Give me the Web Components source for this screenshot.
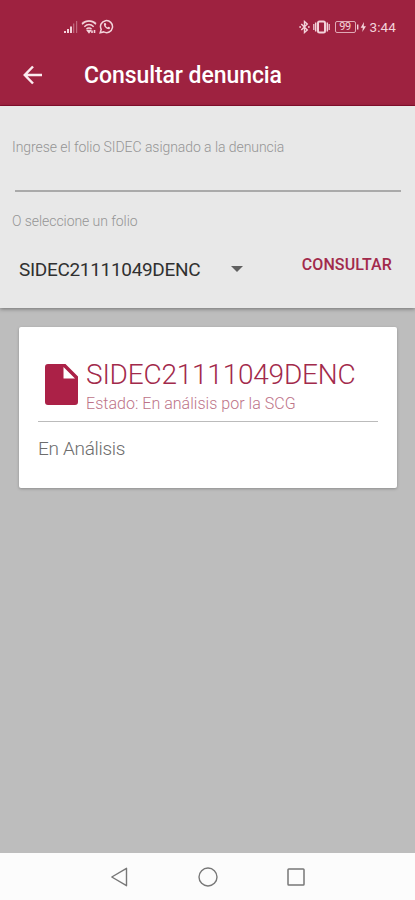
<!DOCTYPE html>
<html lang="es">
<head>
<meta charset="utf-8">
<meta name="viewport" content="width=device-width, initial-scale=1">
<title>Consultar denuncia</title>
<style>
    body {
        margin: 0;
        font-family: Roboto, "Liberation Sans", sans-serif;
    }
</style>
</head>
<body>
<denuncia-app>
    <status-bar slot="header" time="3:44" battery="99"></status-bar>
    <app-bar slot="header">Consultar denuncia</app-bar>
    <folio-form folio="SIDEC21111049DENC"></folio-form>
    <folio-card>
        <span slot="title">SIDEC21111049DENC</span>
        <span slot="state">Estado: En análisis por la SCG</span>
        En Análisis
    </folio-card>
    <nav-bar slot="footer"></nav-bar>
</denuncia-app>

<script>
function attachTemplate(element, html) {
    const template = document.createElement('template');
    template.innerHTML = html;
    const root = element.attachShadow({ mode: 'open' });
    root.appendChild(template.content.cloneNode(true));
    return root;
}

class DenunciaApp extends HTMLElement {
    constructor() {
        super();
        attachTemplate(this, `
            <style>
                :host {
                    display: flex;
                    flex-direction: column;
                    height: 900px;
                    background-color: #bdbdbd;
                }

                header {
                    height: 106px;
                    box-sizing: border-box;
                    background-color: #9e2240;
                    border-bottom: 1px solid #8c0f2f;
                }

                main {
                    flex: 1;
                }
            </style>
            <header><slot name="header"></slot></header>
            <main><slot></slot></main>
            <slot name="footer"></slot>
        `);
    }
}

class StatusBar extends HTMLElement {
    constructor() {
        super();
        this._shadowRoot = attachTemplate(this, `
            <style>
                :host {
                    display: flex;
                    justify-content: space-between;
                    align-items: center;
                    height: 53px;
                    padding: 0 19px 0 63px;
                    box-sizing: border-box;
                    color: #f3d3da;
                    font-size: 13.500px;
                }

                .group {
                    display: flex;
                    align-items: center;
                }

                svg {
                    display: block;
                }

                .battery {
                    display: flex;
                    align-items: center;
                    justify-content: center;
                    width: 21px;
                    height: 12px;
                    box-sizing: border-box;
                    border: 1px solid #e0a9b5;
                    border-radius: 2px;
                    margin-left: 5px;
                    font-size: 11px;
                    line-height: 10px;
                    letter-spacing: -0.3px;
                }

                .time {
                    margin-left: 3px;
                    line-height: 16px;
                    letter-spacing: 0.1px;
                }
            </style>
            <div class="group">
                <svg width="16" height="14" viewBox="0 0 16 14" fill="currentColor">
                    <path d="M1 11h2v2H1zM4 9h2v4H4zM7 6.500h2V13H7z"/>
                    <path d="M10 3.500h1.300V13H10zM13 1h1.200v12H13z" opacity=".4"/>
                </svg>
                <svg style="margin-left: 2px" width="16" height="14" viewBox="0 0 16 14" fill="none" stroke="currentColor" stroke-width="1.500">
                    <path d="M1 4.200C5 0 11 0 15 4.200M3.300 6.700c3-2.800 6.400-2.800 9.400 0M5.500 9c1.400-1.400 3.600-1.400 5 0"/>
                    <path d="M1 2.800C5 .4 11 .4 15 2.800" opacity=".6"/>
                    <path d="M6.500 10.500l1.500 2 1.500-2z"/>
                    <path d="M11 10.500v2.500m2.500-3v3" stroke-width="1.600"/>
                </svg>
                <svg style="margin-left: 2px" width="15" height="15" viewBox="0 0 15 15" fill="none" stroke="currentColor" stroke-width="1.500">
                    <path d="M1.200 13.800l1-3.400A6 6 0 1 1 4.700 12.900z"/>
                    <path d="M5 4.200c-.7 3.200 2.500 6.400 5.700 5.900l.4-1.500-1.700-.9-.9.900C7.600 8.200 6.900 7.500 6.600 6.600l.7-.9-.7-1.600z" fill="currentColor" stroke="none"/>
                </svg>
            </div>
            <div class="group">
                <svg width="11" height="14" viewBox="0 0 11 14" fill="none" stroke="currentColor" stroke-width="1.400">
                    <path d="M2.300 4l6 6L5.500 12.500V1.500L8.300 4l-6 6"/>
                    <path d="M.3 7h1.700M9 7h1.700" stroke-width="1.600"/>
                </svg>
                <svg style="margin-left: 3px" width="17" height="14" viewBox="0 0 17 14" fill="none" stroke="currentColor">
                    <rect x="5" y="1.500" width="7" height="11" rx="1.500" stroke-width="2"/>
                    <path d="M2.700 2.500v9M14.300 2.500v9" stroke-width="1.500"/>
                    <path d="M.8 4v6M16.200 4v6" stroke-width="1.200"/>
                </svg>
                <div class="battery"></div>
                <svg style="margin-left: 1px" width="10" height="12" viewBox="0 0 10 12" fill="currentColor">
                    <path d="M0 3.500h1.400v5H0z"/>
                    <path d="M7 1L3.700 6.700h2.100L5.300 11 9 5.200H6.700z"/>
                </svg>
                <div class="time"></div>
            </div>
        `);
    }

    connectedCallback() {
        this._shadowRoot.querySelector('.battery').textContent = this.getAttribute('battery');
        this._shadowRoot.querySelector('.time').textContent = this.getAttribute('time');
    }
}

class AppBar extends HTMLElement {
    constructor() {
        super();
        attachTemplate(this, `
            <style>
                :host {
                    display: flex;
                    align-items: center;
                    gap: 41px;
                    height: 44px;
                    padding-left: 23px;
                    color: #fff;
                    font-size: 23px;
                    font-weight: 500;
                    letter-spacing: -0.070px;
                }

                svg {
                    display: block;
                }
            </style>
            <svg width="20" height="20" viewBox="0 0 20 20" fill="none" stroke="#fbeaee" stroke-width="2.500">
                <path d="M19 10H2M10 1.500L1.800 10 10 18.500"/>
            </svg>
            <span><slot></slot></span>
        `);
    }
}

class FolioForm extends HTMLElement {
    constructor() {
        super();
        this._shadowRoot = attachTemplate(this, `
            <style>
                :host {
                    display: block;
                    height: 202px;
                    box-sizing: border-box;
                    padding: 32px 14px 0 12px;
                    background-color: #e8e8e8;
                    box-shadow: 0 1px 4px rgba(0, 0, 0, .4);
                }

                label {
                    display: block;
                    color: #959595;
                    font-size: 14px;
                    font-weight: 300;
                    line-height: 18px;
                    letter-spacing: -0.060px;
                }

                .field {
                    height: 34px;
                    margin: 0 0 20px 3px;
                    border-bottom: 2px solid #aaa;
                }

                .row {
                    display: flex;
                    justify-content: space-between;
                    align-items: center;
                    height: 40px;
                    margin-top: 18px;
                    padding: 0 9px 0 7px;
                }

                .select {
                    display: flex;
                    align-items: center;
                    gap: 31px;
                    padding-top: 2px;
                    color: #303030;
                    font-size: 19px;
                    letter-spacing: -0.320px;
                }

                button {
                    margin: 0 0 7px;
                    padding: 0;
                    border: 0;
                    background: none;
                    color: #a22a4b;
                    font-family: inherit;
                    font-size: 16px;
                    font-weight: 500;
                    letter-spacing: 0.100px;
                }
            </style>
            <label>Ingrese el folio SIDEC asignado a la denuncia</label>
            <div class="field"></div>
            <label>O seleccione un folio</label>
            <div class="row">
                <div class="select">
                    <span class="value"></span>
                    <svg width="12" height="6" viewBox="0 0 12 6" fill="#606060"><path d="M0 0h12L6 6z"/></svg>
                </div>
                <button>CONSULTAR</button>
            </div>
        `);
    }

    connectedCallback() {
        this._shadowRoot.querySelector('.value').textContent = this.getAttribute('folio');
    }
}

class FolioCard extends HTMLElement {
    constructor() {
        super();
        attachTemplate(this, `
            <style>
                :host {
                    display: block;
                    height: 161px;
                    margin: 19px 18px 0 19px;
                    padding: 31px 19px 0;
                    box-sizing: border-box;
                    border-radius: 2px;
                    background-color: #fff;
                    box-shadow: 0 1px 3px rgba(0, 0, 0, .25);
                    color: #6d6d6d;
                    font-size: 19px;
                    font-weight: 300;
                    letter-spacing: -0.300px;
                }

                .head {
                    display: flex;
                    height: 63px;
                    padding-left: 7px;
                    border-bottom: 1px solid #bbb;
                }

                svg {
                    display: block;
                    margin: 6px 8px 0 0;
                }

                .title {
                    color: #a22a4b;
                    font-size: 28px;
                    line-height: 34px;
                    letter-spacing: -0.220px;
                }

                .state {
                    color: #bd7388;
                    font-size: 16px;
                    line-height: 24px;
                    letter-spacing: 0.030px;
                }

                .body {
                    margin-top: 15px;
                    line-height: 24px;
                }
            </style>
            <div class="head">
                <svg width="33" height="41" viewBox="0 0 33 41" fill="#ab2147">
                    <path fill-rule="evenodd" d="M3 0h17.500L33 12.500V38a3 3 0 0 1-3 3H3a3 3 0 0 1-3-3V3a3 3 0 0 1 3-3zM18.500 3v11.500H30z"/>
                </svg>
                <div>
                    <div class="title"><slot name="title"></slot></div>
                    <div class="state"><slot name="state"></slot></div>
                </div>
            </div>
            <div class="body"><slot></slot></div>
        `);
    }
}

class NavBar extends HTMLElement {
    constructor() {
        super();
        attachTemplate(this, `
            <style>
                :host {
                    display: flex;
                    justify-content: center;
                    align-items: center;
                    gap: 68px;
                    height: 47px;
                    background-color: #fcfcfc;
                }

                svg {
                    display: block;
                }
            </style>
            <svg width="20" height="20" viewBox="0 0 20 20" fill="none" stroke="#777" stroke-width="1.400" stroke-linejoin="round"><path d="M16.500 1.300v17.400L1.800 10z"/></svg>
            <svg width="20" height="20" viewBox="0 0 20 20" fill="none" stroke="#777" stroke-width="1.400"><circle cx="10" cy="10" r="9"/></svg>
            <svg width="20" height="20" viewBox="0 0 20 20" fill="none" stroke="#777" stroke-width="1.500"><rect x="2" y="2" width="16" height="16" rx=".8"/></svg>
        `);
    }
}

customElements.define('denuncia-app', DenunciaApp);
customElements.define('status-bar', StatusBar);
customElements.define('app-bar', AppBar);
customElements.define('folio-form', FolioForm);
customElements.define('folio-card', FolioCard);
customElements.define('nav-bar', NavBar);
</script>
</body>
</html>
